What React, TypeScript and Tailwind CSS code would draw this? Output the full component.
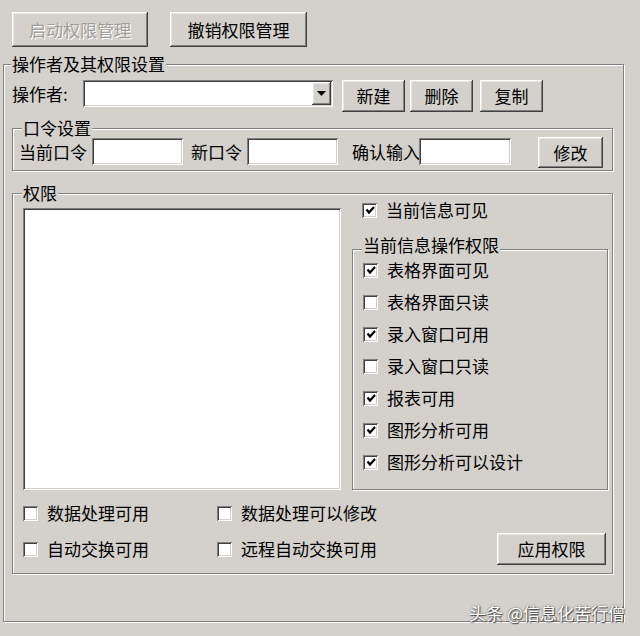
import React from 'react';

// classic 3D look helpers
const raised =
  'shadow-[inset_-1px_-1px_#404040,inset_1px_1px_#ffffff,inset_-2px_-2px_#808080,inset_2px_2px_#e8e6e2]';
const sunken =
  'shadow-[inset_1px_1px_#808080,inset_-1px_-1px_#ffffff,inset_2px_2px_#404040,inset_-2px_-2px_#d4d1cc]';
const etched = 'border border-[#808080] shadow-[inset_1px_1px_#ffffff,1px_1px_#ffffff]';

const Btn = ({ children, className = '', disabled = false }: { children: React.ReactNode; className?: string; disabled?: boolean }) => (
  <div
    className={`flex items-center justify-center whitespace-nowrap bg-[#d4d1cc] ${raised} ${className} ${
      disabled ? 'text-[#a19e99] [text-shadow:1px_1px_#ffffff]' : 'text-black'
    }`}
  >
    {children}
  </div>
);

const Check = ({ label, checked = false, className = '' }: { label: string; checked?: boolean; className?: string }) => (
  <div className={`flex items-center ${className}`}>
    <span className={`w-[15px] h-[15px] bg-white flex items-center justify-center shrink-0 ${sunken}`}>
      {checked && (
        <svg width="10" height="10" viewBox="0 0 10 10">
          <polyline points="1.5,4.5 4,7.5 9,2" fill="none" stroke="#000" strokeWidth="2.2" />
        </svg>
      )}
    </span>
    <span className="ml-[9px] leading-[20px] whitespace-nowrap">{label}</span>
  </div>
);

const Group = ({ title, className = '', titleCls = 'left-[9px] top-[-10px]', children }: { title: string; className?: string; titleCls?: string; children?: React.ReactNode }) => (
  <div className={`relative ${etched} ${className}`}>
    <span className={`absolute ${titleCls} leading-[18px] px-[1px] bg-[#d4d1cc] whitespace-nowrap`}>{title}</span>
    {children}
  </div>
);

const Field = ({ className = '' }: { className?: string }) => (
  <div className={`h-[27px] bg-white shrink-0 ${sunken} ${className}`} />
);

export default function App() {
  return (
    <div className="w-[640px] h-[636px] bg-[#d4d1cc] relative overflow-hidden text-[17px] text-black font-['Noto_Sans_CJK_SC',sans-serif]">
      {/* top buttons */}
      <div className="flex gap-[22px] pl-[12px] pt-[12px]">
        <Btn className="w-[136px] h-[35px]" disabled>启动权限管理</Btn>
        <Btn className="w-[137px] h-[35px]">撤销权限管理</Btn>
      </div>

      <Group title="操作者及其权限设置" className="ml-[3px] mt-[17px] w-[621px] h-[558px]" titleCls="left-[7px] top-[-10px]">
        {/* operator row */}
        <div className="flex items-start mt-[15px]">
          <div className="ml-[8px] w-[71px] h-[27px] flex items-center leading-[20px] whitespace-nowrap">操作者:</div>
          <div className={`w-[250px] h-[27px] bg-white flex justify-end p-[2px] ${sunken}`}>
            <div className={`w-[19px] h-full bg-[#d4d1cc] flex items-center justify-center ${raised}`}>
              <svg width="9" height="5" viewBox="0 0 9 5">
                <polygon points="0,0 9,0 4.5,5" fill="#000" />
              </svg>
            </div>
          </div>
          <Btn className="ml-[9px] w-[63px] h-[32px]">新建</Btn>
          <Btn className="ml-[5px] w-[63px] h-[32px]">删除</Btn>
          <Btn className="ml-[7px] w-[63px] h-[32px]">复制</Btn>
        </div>

        {/* password group */}
        <Group title="口令设置" className="ml-[8px] mt-[16px] w-[601px] h-[43px]">
          <div className="flex items-start pt-[9px] pl-[6px]">
            <div className="w-[73px] h-[27px] flex items-center leading-[20px] whitespace-nowrap">当前口令</div>
            <Field className="w-[91px]" />
            <div className="ml-[8px] w-[56px] h-[27px] flex items-center leading-[20px] whitespace-nowrap">新口令</div>
            <Field className="w-[91px]" />
            <div className="ml-[14px] w-[67px] h-[27px] flex items-center leading-[20px] whitespace-nowrap">确认输入</div>
            <Field className="w-[92px]" />
            <Btn className="ml-[27px] mt-[-1px] w-[65px] h-[31px]">修改</Btn>
          </div>
        </Group>

        {/* permission group */}
        <Group title="权限" className="ml-[8px] mt-[22px] w-[601px] h-[381px]">
          <div className="flex flex-col">
            <div className="flex h-[296px]">
              <div className={`ml-[10px] mt-[14px] w-[318px] h-[282px] bg-white ${sunken}`} />
              <div className="ml-[11px] flex flex-col">
                <Check label="当前信息可见" checked className="h-[32px] pl-[10px]" />
                <Group title="当前信息操作权限" className="mt-[23px] w-[256px] h-[241px]" titleCls="left-[9px] top-[-14px]">
                  <div className="flex flex-col pt-[4px] pl-[10px]">
                    <Check label="表格界面可见" checked className="h-[32px]" />
                    <Check label="表格界面只读" className="h-[32px]" />
                    <Check label="录入窗口可用" checked className="h-[32px]" />
                    <Check label="录入窗口只读" className="h-[32px]" />
                    <Check label="报表可用" checked className="h-[32px]" />
                    <Check label="图形分析可用" checked className="h-[32px]" />
                    <Check label="图形分析可以设计" checked className="h-[32px]" />
                  </div>
                </Group>
              </div>
            </div>
            <div className="flex items-center h-[32px] mt-[7px] pl-[10px]">
              <Check label="数据处理可用" className="w-[194px]" />
              <Check label="数据处理可以修改" />
            </div>
            <div className="flex items-center h-[32px] mt-[4px] pl-[10px]">
              <Check label="自动交换可用" className="w-[194px]" />
              <Check label="远程自动交换可用" />
              <Btn className="ml-auto mr-[6px] w-[109px] h-[32px]">应用权限</Btn>
            </div>
          </div>
        </Group>
      </Group>

      {/* watermark */}
      <div className="absolute right-[15px] bottom-[13px] text-[17px] leading-[20px] text-white [text-shadow:0_0_2px_#4a4a4a,1px_1px_1px_#4a4a4a] whitespace-nowrap">
        头条 @信息化苦行僧
      </div>
    </div>
  );
}
